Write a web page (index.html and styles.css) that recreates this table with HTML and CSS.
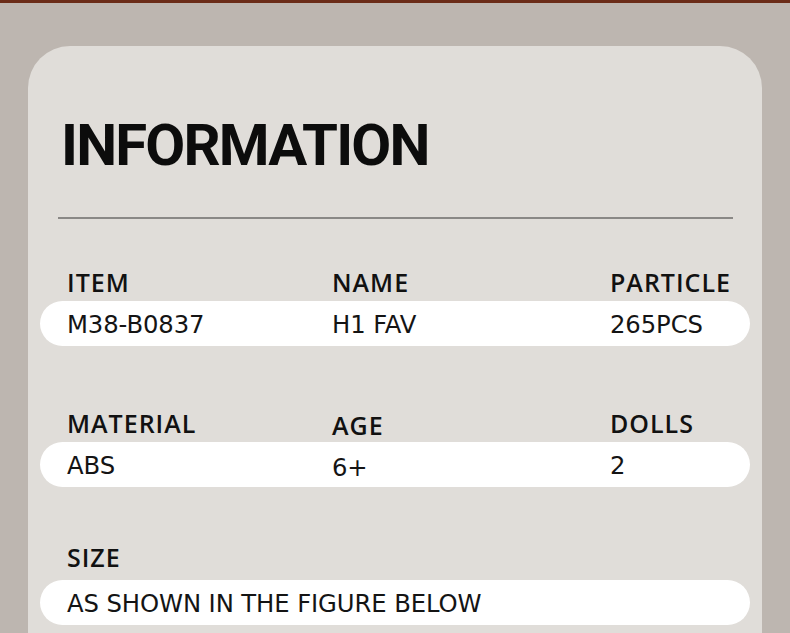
FILE: index.html
```html
<!DOCTYPE html>
<html>
<head>
<meta charset="utf-8">
<link rel="stylesheet" href="styles.css">
</head>
<body>
<div class="topline"></div>
<main class="card">
  <h1 class="title">INFORMATION</h1>
  <hr class="rule">
  <section class="group">
    <div class="labels cols">
      <span>ITEM</span><span>NAME</span><span>PARTICLE</span>
    </div>
    <div class="pill cols">
      <span>M38-B0837</span><span>H1 FAV</span><span>265PCS</span>
    </div>
  </section>
  <section class="group g2">
    <div class="labels cols">
      <span>MATERIAL</span><span class="low">AGE</span><span>DOLLS</span>
    </div>
    <div class="pill cols">
      <span>ABS</span><span class="low">6+</span><span>2</span>
    </div>
  </section>
  <section class="group g3">
    <div class="labels">
      <span>SIZE</span>
    </div>
    <div class="pill">
      <span>AS SHOWN IN THE FIGURE BELOW</span>
    </div>
  </section>
</main>
</body>
</html>
```
FILE: styles.css
```css
html, body {
  margin: 0;
  padding: 0;
}
body {
  width: 790px;
  height: 633px;
  overflow: hidden;
  background: #bdb6b0;
  font-family: "Open Sans", "Noto Sans", sans-serif;
  color: #111;
}
.topline {
  height: 3px;
  background: #6b2c18;
}
.card {
  margin: 43px 0 0 28px;
  width: 734px;
  height: 600px;
  background: #e0ddd9;
  border-radius: 42px 42px 0 0;
  padding-top: 1px;
  box-sizing: border-box;
}
.title {
  margin: 63px 0 0 33px;
  font-family: Roboto, "Open Sans", sans-serif;
  font-size: 58px;
  font-weight: 700;
  line-height: 70px;
  letter-spacing: -1.8px;
  color: #0c0c0c;
}
.rule {
  margin: 37px 29px 0 30px;
  border: 0;
  height: 2px;
  background: #8a8886;
}
.cols {
  display: grid;
  grid-template-columns: 265px 278px 1fr;
}
.group {
  margin-top: 46px;
}
.g2 {
  margin-top: 60px;
}
.g3 {
  margin-top: 53px;
}
.g3 .pill {
  margin-top: 6px;
}
.labels {
  padding-left: 39px;
  font-size: 25px;
  font-weight: 600;
  line-height: 34px;
  letter-spacing: 1px;
  color: #111;
}
.pill {
  margin: 2px 12px 0 12px;
  height: 45px;
  box-sizing: border-box;
  padding: 2px 0 0 27px;
  background: #ffffff;
  border-radius: 23px;
  font-family: "DejaVu Sans", "Open Sans", sans-serif;
  font-size: 24.3px;
  font-weight: 400;
  line-height: 43px;
  letter-spacing: -0.1px;
  color: #141414;
}
.low {
  position: relative;
  top: 2px;
}
```
